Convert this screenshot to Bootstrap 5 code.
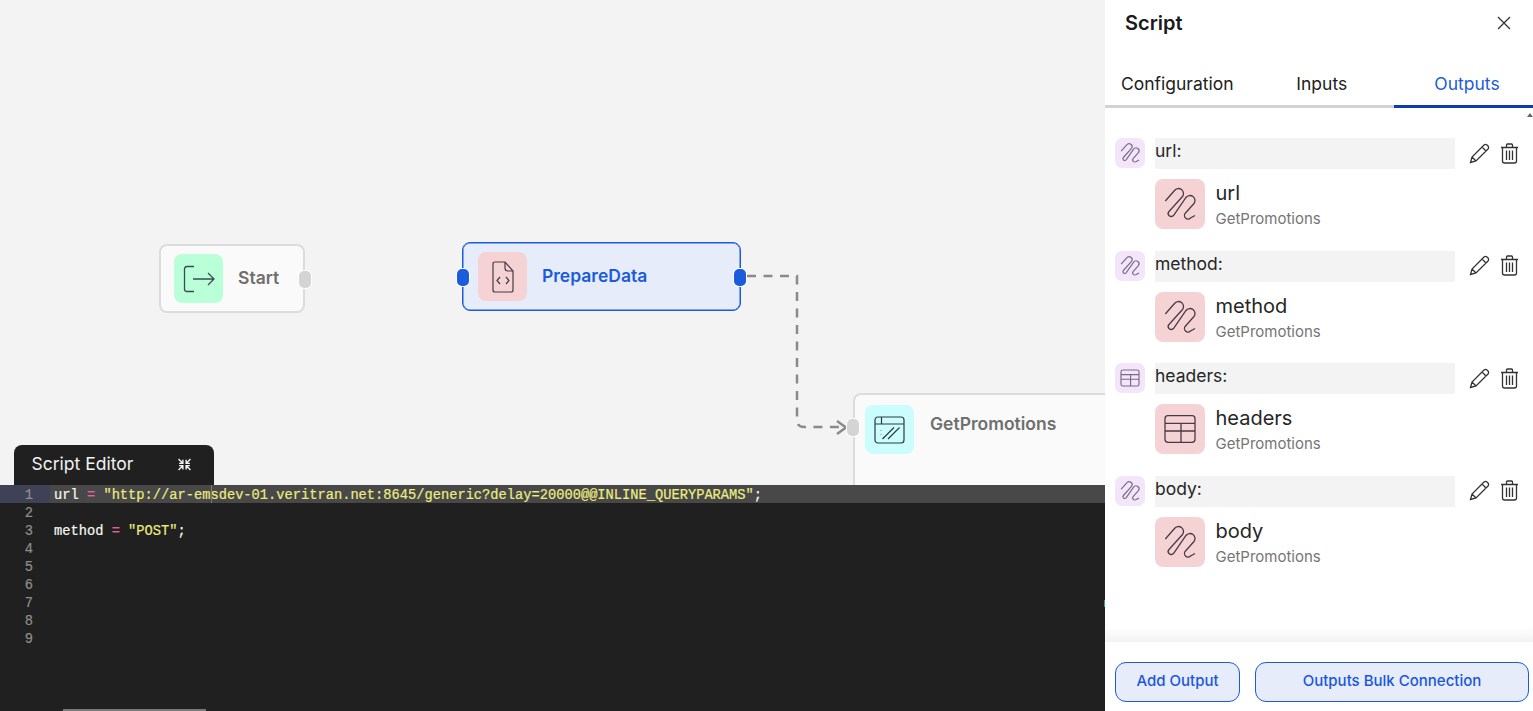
<!DOCTYPE html>
<html lang="en">
<head>
<meta charset="utf-8">
<title>Script</title>
<link href="https://cdn.jsdelivr.net/npm/bootstrap@5.3.0/dist/css/bootstrap.min.css" rel="stylesheet">
<style>
html,body{height:711px;overflow:hidden}
body{font-family:Inter,"Liberation Sans",sans-serif;background:#f3f3f3;color:#212121}
.app-shell{height:711px;width:1533px}
.work-area{width:1105px}
.flow-canvas{height:485px;background:#f3f3f3;overflow:hidden}
.flow-node{position:absolute;border:2px solid #dcdcdc;background:#fafafa;border-radius:8px;padding:9px 13px;gap:15px;height:69px;color:#6f6f6f;font-weight:600;font-size:17.5px}
.flow-node.is-active{border:1px solid #1a5cdb;box-shadow:inset 0 0 0 .5px #1a5cdb;background:#e6ecfa;color:#1a5cdb}
.node-start{left:159px;top:244px;width:146px}
.node-prepare{left:462px;top:242px;width:279px;padding:10px 15px}
.node-promo{left:853px;top:393px;width:400px;height:200px;padding:10px;align-items:flex-start}
.node-promo .node-name{margin-top:6px;margin-left:1px}
.node-icon{width:49px;height:49px;border-radius:8px;flex:none}
.tone-green{background:#b9ffd8}.tone-red{background:#f5d3d5}.tone-cyan{background:#ccfdfd}
.node-port{position:absolute;width:12px;height:17px;border-radius:5px;background:#d4d4d4;box-shadow:0 0 0 1px #fff}
.node-port.is-blue{background:#1a5cdb}
.flow-wires{position:absolute;left:0;top:0;pointer-events:none}
.editor-tab{position:absolute;left:14px;top:445px;width:200px;height:40px;background:#202020;color:#f2f2f2;border-radius:8px 8px 0 0;font-size:17.5px;padding:0 23px 2px 17.500px}
.code-editor{height:226px;background:#202020;font-family:"Liberation Mono",monospace;font-size:13.73px;line-height:22px;overflow:hidden;color:#f8f8f2;-webkit-text-stroke:.2px}
.code-line{height:18px;white-space:pre}
.code-line.is-current{background:#484848}
.code-gutter{width:50px;flex:none;color:#8f908a;text-align:right;padding-right:17px}
.is-current .code-gutter{background:#3f4257}
.code-text{padding-left:4px}
.tok-str{color:#ecec80}.tok-op{color:#e0609a}
.code-caret{position:absolute;left:211px;top:0;width:1px;height:18px;background:#7a7a7a}
.code-scroll{position:absolute;left:63px;bottom:0;width:143px;height:2px;background:#7a7a7a}
.side-panel{width:428px;background:#fff;z-index:2}
.panel-title{height:68px;padding:0 20px 23px;font-size:20px;font-weight:600;color:#1a1a1a}
.panel-close{width:18px;height:18px}
.tab-strip{height:40px}
.tab-item{flex:none;width:144.500px;font-size:17.500px;color:#212121;border-bottom:3px solid #d3d3d3;padding-bottom:5px;text-decoration:none;display:flex;align-items:center;justify-content:center;height:40px}
.tab-item.is-on{width:139px;padding-left:7px;color:#1a5cdb;border-bottom-color:#0a3db0}
.tab-arrow{position:absolute;right:0;top:113px;width:0;height:0;border-left:3px solid transparent;border-right:3px solid transparent;border-bottom:4px solid #666}
.output-list{padding:30px 13px 0 10px}
.output-item{height:112.6px}
.mini-icon{width:30px;height:30px;border-radius:7px;background:#f3e6fb;flex:none}
.mini-icon svg{width:30px;height:30px;stroke:#7a6a82;stroke-width:1.900}
.name-field{width:300px;height:31px;background:#f3f3f3;margin-left:10px;font-size:17.500px;line-height:25px;color:#262626;flex:none}
.row-tools{margin-left:14px;gap:10px;padding-bottom:1px}
.source-row{margin-left:40px;margin-top:10px;gap:10.500px}
.source-icon{width:50px;height:50px;border-radius:8px;background:#f5d3d5;flex:none}
.source-icon svg{width:50px;height:50px;stroke:#4a3a44;stroke-width:1.300}
.source-name{font-size:20px;line-height:26px;color:#262626;margin-top:1px}
.source-owner{font-size:15px;line-height:20px;color:#757575;margin-top:3px}
.panel-foot{height:69px;padding:20px 4px 9px 10px;gap:15px;position:relative;background:#fff}
.panel-foot::before{content:"";position:absolute;left:0;right:0;top:-16px;height:16px;background:linear-gradient(to bottom,rgba(243,243,243,0),#f3f3f3)}
.foot-btn{height:40px;border:1.5px solid #1a5cdb;background:#e6ecfa;color:#1a56db;border-radius:11px;font-size:15px;font-weight:500;padding:0 0 1px}
.foot-add{width:125px}.foot-bulk{width:274px}
.edge-mark{position:absolute;left:1104px;top:600px;width:1px;height:7px;background:#2f9f86}
</style>
</head>
<body>
<svg class="d-none">
  <symbol id="ic-clip" viewBox="0 0 50 50"><path d="M10.300 22L19.500 11.500A5 5 0 0 1 27.500 17.500L14 32.500A3 3 0 0 0 18.500 36.500L31 18.500A5 5 0 0 1 39 24.500L30.500 34A3.500 3.500 0 0 0 35.500 39L40 36.500"/></symbol>
  <symbol id="ic-table" viewBox="0 0 50 50"><rect x="10" y="11.700" width="30" height="26.600" rx="3"/><path d="M10 19.300H40M10 27H40M26 19.300V38.300"/></symbol>
  <symbol id="ic-pen" viewBox="0 0 21 21"><path d="M1.500 19.500L3 14L15 2Q16.500 0.800 18 2L19 3Q20.200 4.500 19 6L7 18ZM3 14L7 18M13 4L17 8"/></symbol>
  <symbol id="ic-bin" viewBox="0 0 19 21"><path d="M1 4.500H18M6.500 4.500V2Q6.500 1 7.500 1H11.500Q12.500 1 12.500 2V4.500M2.500 4.500V18Q2.500 20 4.500 20H14.500Q16.500 20 16.500 18V4.500M6.500 7.500V17M9.500 7.500V17M12.500 7.500V17"/></symbol>
</svg>
<div class="app-shell d-flex position-relative">
  <div class="work-area d-flex flex-column flex-shrink-0">
    <div class="flow-canvas position-relative">
      <svg class="flow-wires" width="1105" height="485" fill="none" stroke="#8a8a8a" stroke-width="2.500">
        <path d="M747 276H797V420Q797 427 804 427H845" stroke-dasharray="9 7.500"/>
        <path d="M837 421L846 427.500L837 434"/>
      </svg>
      <div class="flow-node node-start d-flex align-items-center">
        <span class="node-icon tone-green d-flex align-items-center justify-content-center">
          <svg width="32" height="28" viewBox="0 0 32 28" fill="none" stroke="#3b4a54" stroke-width="1.300"><path d="M11 1.500H4Q1.500 1.500 1.500 4V24Q1.500 26.500 4 26.500H11M10 14H31M25 8L31 14L25 20"/></svg>
        </span>
        <span class="node-name">Start</span>
        <span class="node-port" style="left:137.500px;top:24.500px"></span>
      </div>
      <div class="flow-node node-prepare is-active d-flex align-items-center">
        <span class="node-icon tone-red d-flex align-items-center justify-content-center">
          <svg width="24" height="32" viewBox="0 0 24 32" fill="none" stroke="#4a3a44" stroke-width="1.200"><path d="M14 1H4Q2 1 2 3V29Q2 31 4 31H20Q22 31 22 29V10L14 1ZM14 1V7Q14 10 17 10H22M9 16L6 19.500L9 23M15 16L18 19.500L15 23"/></svg>
        </span>
        <span class="node-name">PrepareData</span>
        <span class="node-port is-blue" style="left:-6px;top:25.500px"></span>
        <span class="node-port is-blue" style="left:271px;top:25.500px"></span>
      </div>
      <div class="flow-node node-promo d-flex">
        <span class="node-icon tone-cyan d-flex align-items-center justify-content-center">
          <svg width="31" height="28" viewBox="0 0 31 28" fill="none" stroke="#2c3a46" stroke-width="1.200"><rect x="1" y="1" width="29" height="26" rx="3"/><path d="M1 8H30M7.500 1V8M8.500 23L20 11.500M14 23L25.500 11.500M7 14V14.500M7 18V18.500M9.500 21V21.500"/></svg>
        </span>
        <span class="node-name">GetPromotions</span>
        <span class="node-port" style="left:-8px;top:24px"></span>
      </div>
    </div>
    <div class="editor-tab d-flex align-items-center justify-content-between">
      <span>Script Editor</span>
      <svg width="13" height="13" viewBox="0 0 12 12" fill="none" stroke="#f2f2f2" stroke-width="1.300"><path d="M0.500 1L4.500 5M4.500 1.500V5H1M11.500 1L7.500 5M7.500 1.500V5H11M0.500 11L4.500 7M4.500 10.500V7H1M11.500 11L7.500 7M7.500 10.500V7H11"/></svg>
    </div>
    <div class="code-editor position-relative flex-grow-1">
      <div class="code-line is-current d-flex position-relative"><span class="code-gutter">1</span><span class="code-text">url <span class="tok-op">=</span> <span class="tok-str">"http://ar-emsdev-01.veritran.net:8645/generic?delay=20000@@INLINE_QUERYPARAMS"</span>;</span><span class="code-caret"></span></div>
      <div class="code-line d-flex"><span class="code-gutter">2</span></div>
      <div class="code-line d-flex"><span class="code-gutter">3</span><span class="code-text">method <span class="tok-op">=</span> <span class="tok-str">"POST"</span>;</span></div>
      <div class="code-line d-flex"><span class="code-gutter">4</span></div>
      <div class="code-line d-flex"><span class="code-gutter">5</span></div>
      <div class="code-line d-flex"><span class="code-gutter">6</span></div>
      <div class="code-line d-flex"><span class="code-gutter">7</span></div>
      <div class="code-line d-flex"><span class="code-gutter">8</span></div>
      <div class="code-line d-flex"><span class="code-gutter">9</span></div>
      <span class="code-scroll"></span>
    </div>
    <span class="edge-mark"></span>
  </div>

  <aside class="side-panel d-flex flex-column flex-shrink-0 position-relative">
    <div class="panel-title d-flex align-items-center justify-content-between">
      <span>Script</span>
      <svg class="panel-close" viewBox="0 0 18 18" fill="none" stroke="#333" stroke-width="1.300"><path d="M3 3L15 15M15 3L3 15"/></svg>
    </div>
    <nav class="tab-strip d-flex">
      <a class="tab-item" href="#">Configuration</a>
      <a class="tab-item" href="#">Inputs</a>
      <a class="tab-item is-on" href="#">Outputs</a>
    </nav>
    <span class="tab-arrow"></span>
    <div class="output-list flex-grow-1">
      <div class="output-item">
        <div class="d-flex">
          <span class="mini-icon d-flex"><svg fill="none"><use href="#ic-clip"/></svg></span>
          <div class="name-field">url:</div>
          <div class="row-tools d-flex align-items-center">
            <svg width="21" height="21" fill="none" stroke="#333" stroke-width="1.300"><use href="#ic-pen"/></svg>
            <svg width="19" height="21" fill="none" stroke="#333" stroke-width="1.300"><use href="#ic-bin"/></svg>
          </div>
        </div>
        <div class="source-row d-flex">
          <span class="source-icon d-flex"><svg fill="none"><use href="#ic-clip"/></svg></span>
          <div><div class="source-name">url</div><div class="source-owner">GetPromotions</div></div>
        </div>
      </div>
      <div class="output-item">
        <div class="d-flex">
          <span class="mini-icon d-flex"><svg fill="none"><use href="#ic-clip"/></svg></span>
          <div class="name-field">method:</div>
          <div class="row-tools d-flex align-items-center">
            <svg width="21" height="21" fill="none" stroke="#333" stroke-width="1.300"><use href="#ic-pen"/></svg>
            <svg width="19" height="21" fill="none" stroke="#333" stroke-width="1.300"><use href="#ic-bin"/></svg>
          </div>
        </div>
        <div class="source-row d-flex">
          <span class="source-icon d-flex"><svg fill="none"><use href="#ic-clip"/></svg></span>
          <div><div class="source-name">method</div><div class="source-owner">GetPromotions</div></div>
        </div>
      </div>
      <div class="output-item">
        <div class="d-flex">
          <span class="mini-icon d-flex"><svg fill="none"><use href="#ic-table"/></svg></span>
          <div class="name-field">headers:</div>
          <div class="row-tools d-flex align-items-center">
            <svg width="21" height="21" fill="none" stroke="#333" stroke-width="1.300"><use href="#ic-pen"/></svg>
            <svg width="19" height="21" fill="none" stroke="#333" stroke-width="1.300"><use href="#ic-bin"/></svg>
          </div>
        </div>
        <div class="source-row d-flex">
          <span class="source-icon d-flex"><svg fill="none"><use href="#ic-table"/></svg></span>
          <div><div class="source-name">headers</div><div class="source-owner">GetPromotions</div></div>
        </div>
      </div>
      <div class="output-item">
        <div class="d-flex">
          <span class="mini-icon d-flex"><svg fill="none"><use href="#ic-clip"/></svg></span>
          <div class="name-field">body:</div>
          <div class="row-tools d-flex align-items-center">
            <svg width="21" height="21" fill="none" stroke="#333" stroke-width="1.300"><use href="#ic-pen"/></svg>
            <svg width="19" height="21" fill="none" stroke="#333" stroke-width="1.300"><use href="#ic-bin"/></svg>
          </div>
        </div>
        <div class="source-row d-flex">
          <span class="source-icon d-flex"><svg fill="none"><use href="#ic-clip"/></svg></span>
          <div><div class="source-name">body</div><div class="source-owner">GetPromotions</div></div>
        </div>
      </div>
    </div>
    <div class="panel-foot d-flex">
      <button class="btn foot-btn foot-add" type="button">Add Output</button>
      <button class="btn foot-btn foot-bulk" type="button">Outputs Bulk Connection</button>
    </div>
  </aside>
</div>
<script src="https://cdn.jsdelivr.net/npm/bootstrap@5.3.0/dist/js/bootstrap.bundle.min.js"></script>
</body>
</html>
